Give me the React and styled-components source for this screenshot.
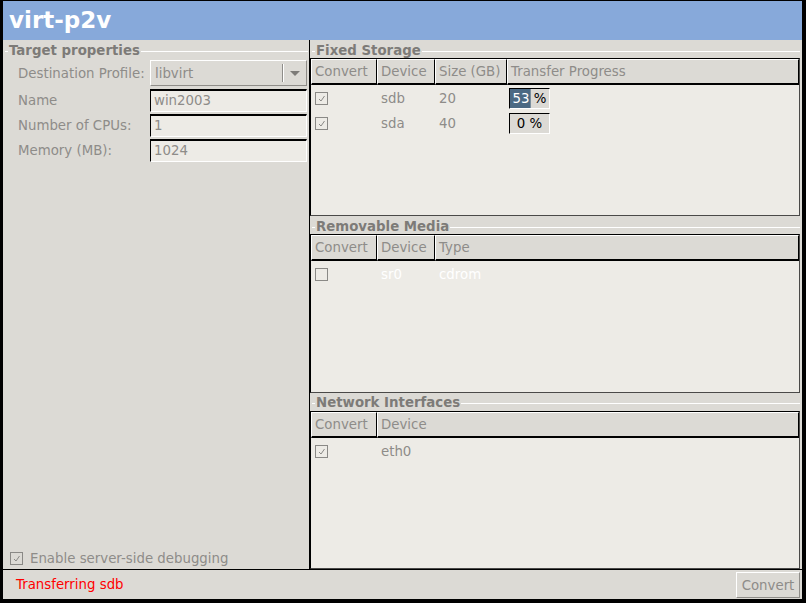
import React from "react";
import styled, { createGlobalStyle } from "styled-components";

const COLORS = {
  window: "#dcdad5",
  base: "#edebe6",
  title: "#87a9da",
  dim: "#7d7b78",
  dimmer: "#8e8c89",
  select: "#4b6983",
  dark: "#000",
  shade: "#4a4948",
};

const GlobalStyle = createGlobalStyle`
  html, body { margin: 0; padding: 0; background: #000; }
  body { font-family: "DejaVu Sans", "Liberation Sans", sans-serif; font-size: 13.33px; }
  * { box-sizing: border-box; }
`;

const fixedColumns = [
  { title: "Convert", width: 66 },
  { title: "Device", width: 58 },
  { title: "Size (GB)", width: 72 },
  { title: "Transfer Progress" },
];

const fixedRows = [
  { device: "sdb", size: "20", progress: 53 },
  { device: "sda", size: "40", progress: 0 },
];

const CheckMark = () => (
  <svg width="11" height="11" viewBox="0 0 11 11">
    <path d="M3 6 L5 8 L8.5 3" fill="none" stroke="#8a8986" strokeWidth="1" />
  </svg>
);

const Check = ({ checked }) => (
  <CheckBox>{checked ? <CheckMark /> : null}</CheckBox>
);

const Legend = ({ children }) => (
  <LegendRow>
    <LegendTick />
    <LegendText>{children}</LegendText>
    <LegendLine />
  </LegendRow>
);

// GTK-style bar: dark fill with the label drawn again in white over it
const Progress = ({ value }) => {
  const label = `${value} %`;
  return (
    <ProgressBox>
      <ProgressText>{label}</ProgressText>
      <ProgressFill style={{ clipPath: `inset(0 ${100 - value}% 0 0)` }}>
        <ProgressText $light>{label}</ProgressText>
      </ProgressFill>
    </ProgressBox>
  );
};

const Header = ({ columns }) => (
  <HeaderRow>
    {columns.map((c) => (
      <HeaderCell key={c.title} $width={c.width}>
        {c.title}
      </HeaderCell>
    ))}
  </HeaderRow>
);

export default function App() {
  return (
    <>
      <GlobalStyle />
      <Window>
        <TitleBar>virt-p2v</TitleBar>
        <Body>
          <Main>
            <LeftPane>
              <Legend>Target properties</Legend>
              <Form>
                <FieldLabel>Destination Profile:</FieldLabel>
                <Combo>
                  <ComboText>libvirt</ComboText>
                  <ComboSep />
                  <ComboArrow />
                </Combo>
                <FieldLabel>Name</FieldLabel>
                <Entry>win2003</Entry>
                <FieldLabel>Number of CPUs:</FieldLabel>
                <Entry>1</Entry>
                <FieldLabel>Memory (MB):</FieldLabel>
                <Entry>1024</Entry>
              </Form>
              <DebugRow>
                <Check checked />
                <span>Enable server-side debugging</span>
              </DebugRow>
            </LeftPane>

            <RightPane>
              <Frame>
                <Legend>Fixed Storage</Legend>
                <Tree>
                  <Header columns={fixedColumns} />
                  {fixedRows.map((r) => (
                    <Row key={r.device}>
                      <Cell $width={66}>
                        <Check checked />
                      </Cell>
                      <Cell $width={58}>{r.device}</Cell>
                      <Cell $width={72}>{r.size}</Cell>
                      <Cell>
                        <Progress value={r.progress} />
                      </Cell>
                    </Row>
                  ))}
                </Tree>
              </Frame>

              <Frame>
                <Legend>Removable Media</Legend>
                <Tree>
                  <Header
                    columns={[
                      { title: "Convert", width: 66 },
                      { title: "Device", width: 58 },
                      { title: "Type" },
                    ]}
                  />
                  <Row>
                    <Cell $width={66}>
                      <Check />
                    </Cell>
                    <Cell $width={58} $tone="#fff">
                      sr0
                    </Cell>
                    <Cell $tone="#fff">cdrom</Cell>
                  </Row>
                </Tree>
              </Frame>

              <Frame>
                <Legend>Network Interfaces</Legend>
                <Tree>
                  <Header
                    columns={[
                      { title: "Convert", width: 66 },
                      { title: "Device" },
                    ]}
                  />
                  <Row>
                    <Cell $width={66}>
                      <Check checked />
                    </Cell>
                    <Cell>eth0</Cell>
                  </Row>
                </Tree>
              </Frame>
            </RightPane>
          </Main>

          <StatusBar>
            <StatusText>Transferring sdb</StatusText>
            <Button disabled>Convert</Button>
          </StatusBar>
        </Body>
      </Window>
    </>
  );
}

const Window = styled.div`
  width: 806px;
  height: 603px;
  background: #000;
  padding: 1px 4px 4px 3px;
  display: flex;
  flex-direction: column;
`;

const TitleBar = styled.div`
  height: 39px;
  background: ${COLORS.title};
  color: #fff;
  font-weight: bold;
  font-size: 23px;
  line-height: 38px;
  padding-left: 6px;
`;

const Body = styled.div`
  flex: 1;
  display: flex;
  flex-direction: column;
  background: ${COLORS.window};
  color: ${COLORS.dim};
`;

const Main = styled.div`
  flex: 1;
  display: flex;
  min-height: 0;
`;

const LeftPane = styled.div`
  width: 307px;
  display: flex;
  flex-direction: column;
  border-right: 1px solid ${COLORS.dark};
  padding-top: 2px;
  padding-right: 1px;
`;

const RightPane = styled.div`
  flex: 1;
  display: flex;
  flex-direction: column;
  padding-right: 2px;
`;

const LegendRow = styled.div`
  height: 16px;
  display: flex;
  align-items: center;
`;

const LegendTick = styled.div`
  width: 3px;
  margin-left: 2px;
  border-top: 1px solid #fff;
  align-self: center;
  margin-top: 2px;
`;

const LegendText = styled.div`
  font-weight: bold;
  color: ${COLORS.dim};
  padding: 0 1px;
`;

const LegendLine = styled.div`
  flex: 1;
  border-top: 1px solid #fff;
  margin-top: 2px;
`;

const Form = styled.div`
  display: grid;
  grid-template-columns: 132px 157px;
  grid-auto-rows: 23px;
  grid-template-rows: 27px;
  row-gap: 2px;
  padding-left: 15px;
  margin-top: 2px;
  align-items: center;
`;

const FieldLabel = styled.div`
  color: ${COLORS.dimmer};
  white-space: nowrap;
`;

const Combo = styled.div`
  height: 26px;
  align-self: start;
  display: flex;
  align-items: center;
  border: 1px solid;
  border-color: #fff #8f8d89 #8f8d89 #fff;
`;

const ComboText = styled.div`
  flex: 1;
  padding-left: 4px;
  color: ${COLORS.dimmer};
`;

const ComboSep = styled.div`
  width: 2px;
  height: 18px;
  border-left: 1px solid #8f8d89;
  border-right: 1px solid #fff;
`;

const ComboArrow = styled.div`
  width: 0;
  height: 0;
  margin: 0 6px 0 6px;
  border-left: 5px solid transparent;
  border-right: 5px solid transparent;
  border-top: 5px solid ${COLORS.dim};
`;

const Entry = styled.div`
  height: 23px;
  background: ${COLORS.base};
  border: 1px solid;
  border-color: #000 #fff #fff #000;
  border-top-width: 2px;
  padding-left: 3px;
  line-height: 19px;
  color: ${COLORS.dimmer};
`;

const DebugRow = styled.div`
  margin-top: auto;
  display: flex;
  align-items: center;
  gap: 7px;
  padding: 0 0 3px 7px;
  color: ${COLORS.dimmer};
`;

const CheckBox = styled.div`
  width: 13px;
  height: 13px;
  border: 1px solid #8a8986;
  display: flex;
  align-items: center;
  justify-content: center;
  flex-shrink: 0;
`;

const Frame = styled.div`
  flex: 1;
  display: flex;
  flex-direction: column;
  padding-top: 2px;
  min-height: 0;
`;

const Tree = styled.div`
  flex: 1;
  background: ${COLORS.base};
  border: 1px solid;
  border-color: #000 ${COLORS.shade} ${COLORS.shade} #000;
`;

const HeaderRow = styled.div`
  display: flex;
  height: 26px;
`;

const HeaderCell = styled.div`
  ${(p) => (p.$width ? `width: ${p.$width}px;` : "flex: 1;")}
  background: ${COLORS.window};
  border: 1px solid;
  border-color: #fff #000 #000 #fff;
  border-bottom-width: 2px;
  padding: 1px 0 0 3px;
  line-height: 22px;
  color: ${COLORS.dimmer};
  white-space: nowrap;
  overflow: hidden;
`;

const Row = styled.div`
  display: flex;
  height: 25px;
  padding-top: 2px;
  align-items: center;
`;

const Cell = styled.div`
  ${(p) => (p.$width ? `width: ${p.$width}px;` : "flex: 1;")}
  padding-left: 4px;
  color: ${(p) => p.$tone || COLORS.dimmer};
  display: flex;
  align-items: center;
`;

const ProgressBox = styled.div`
  position: relative;
  width: 41px;
  height: 21px;
  margin-left: -2px;
  background: ${COLORS.window};
  border: 1px solid;
  border-color: #000 #fff #fff #000;
`;

const ProgressText = styled.div`
  width: 39px;
  line-height: 19px;
  text-align: center;
  color: ${(p) => (p.$light ? "#fff" : "#000")};
  white-space: nowrap;
`;

const ProgressFill = styled.div`
  position: absolute;
  inset: 0;
  background: ${COLORS.select};
`;

const StatusBar = styled.div`
  height: 30px;
  border-top: 1px solid #000;
  display: flex;
  align-items: center;
  justify-content: space-between;
  padding: 2px 2px 0 13px;
`;

const StatusText = styled.div`
  color: #ff0000;
  margin-top: -2px;
`;

const Button = styled.button`
  width: 64px;
  height: 26px;
  align-self: flex-start;
  font-family: inherit;
  font-size: 13.33px;
  color: ${COLORS.dimmer};
  background: ${COLORS.window};
  border: 1px solid;
  border-color: #fff #8f8d89 #8f8d89 #fff;
  padding: 0;
`;
